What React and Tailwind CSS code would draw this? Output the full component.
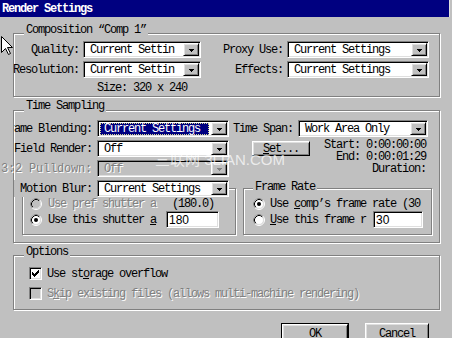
import React from "react";

const dim = "text-[#808080] [text-shadow:1px_1px_0_#fff]";
const sunken =
  "border border-t-[#808080] border-l-[#808080] border-r-white border-b-white shadow-[inset_1px_1px_0_#000,inset_-1px_-1px_0_#dfdfdf]";
const raised =
  "border border-t-white border-l-white border-r-black border-b-black shadow-[inset_1px_1px_0_#dfdfdf,inset_-1px_-1px_0_#808080]";

function Arrow({ off }) {
  const c = off ? "#808080" : "#000";
  return (
    <svg width="5" height="3" viewBox="0 0 5 3" shapeRendering="crispEdges">
      <rect x="0" y="0" width="5" height="1" fill={c} />
      <rect x="1" y="1" width="3" height="1" fill={c} />
      <rect x="2" y="2" width="1" height="1" fill={c} />
    </svg>
  );
}

function Combo({ className, value, selected, disabled }) {
  return (
    <div className={`${className} h-[17px] shrink-0 flex p-[1px] ${sunken} ${disabled ? "bg-[#c0c0c0]" : "bg-white"}`}>
      <div className="flex-1 min-w-0 flex items-center overflow-hidden whitespace-nowrap">
        {selected ? (
          <span className="ml-[1px] mr-[2px] flex-1 h-[12px] flex items-center pl-[3px] bg-[#000080] text-white border border-dotted border-[#d8d890]">
            {value}
          </span>
        ) : (
          <span className={`pl-[5px] ${disabled ? dim : ""}`}>{value}</span>
        )}
      </div>
      <div className={`w-[16px] h-full shrink-0 flex items-center justify-center pt-[1px] bg-[#c0c0c0] ${raised}`}>
        <Arrow off={disabled} />
      </div>
    </div>
  );
}

function Radio({ checked, disabled }) {
  return (
    <svg width="12" height="12" viewBox="0 0 12 12" className="shrink-0">
      <circle cx="6" cy="6" r="5.5" fill="none" stroke="#fff" />
      <path d="M2.11 9.89A5.5 5.5 0 0 1 9.89 2.11" fill="none" stroke="#808080" />
      <circle cx="6" cy="6" r="4.5" fill={disabled ? "#c0c0c0" : "#fff"} stroke="#dfdfdf" />
      <path d="M2.82 9.18A4.5 4.5 0 0 1 9.18 2.82" fill="none" stroke="#000" />
      {checked && <circle cx="6" cy="6" r="2" fill="#000" />}
    </svg>
  );
}

function Check({ checked, disabled }) {
  return (
    <div className={`w-[13px] h-[13px] shrink-0 flex items-center justify-center ${sunken} ${disabled ? "bg-[#c0c0c0]" : "bg-white"}`}>
      {checked && (
        <svg width="7" height="7" viewBox="0 0 7 7" shapeRendering="crispEdges">
          <rect x="6" y="0" width="1" height="1" />
          <rect x="5" y="1" width="2" height="1" />
          <rect x="0" y="2" width="1" height="1" />
          <rect x="4" y="2" width="3" height="1" />
          <rect x="0" y="3" width="2" height="1" />
          <rect x="3" y="3" width="3" height="1" />
          <rect x="0" y="4" width="5" height="1" />
          <rect x="1" y="5" width="3" height="1" />
          <rect x="2" y="6" width="1" height="1" />
        </svg>
      )}
    </div>
  );
}

function Field({ className, value }) {
  return (
    <div className={`${className} h-[17px] shrink-0 bg-white flex items-center pl-[2px] font-['Liberation_Sans',sans-serif] text-[12px] tracking-normal ${sunken}`}>
      {value}
    </div>
  );
}

function Label({ className, children }) {
  return (
    <div className={`${className} shrink-0 flex justify-end whitespace-nowrap`}>
      <span>{children}</span>
    </div>
  );
}

function Group({ className, title, titleClass, children }) {
  return (
    <div className={`relative shrink-0 border border-[#808080] shadow-[inset_1px_1px_0_#fff,1px_1px_0_#fff] ${className}`}>
      {title && (
        <div className={`absolute px-[2px] bg-[#c0c0c0] whitespace-nowrap ${titleClass}`}>{title}</div>
      )}
      {children}
    </div>
  );
}

export default function App() {
  return (
    <div className="relative w-[452px] h-[338px] overflow-hidden bg-[#c0c0c0] text-black font-['Liberation_Mono',monospace] text-[12px] leading-[12px] tracking-[-1.2px] flex flex-col">
      <div className="flex shrink-0">
        <div className="w-[449px] h-[17px] bg-[#000080] text-white font-bold flex items-center pl-[2px]">
          Render Settings
        </div>
        <div className="w-[1px] h-[17px] bg-[#dfdfdf]" />
      </div>

      {/* Composition */}
      <Group
        className="ml-[13px] mt-[16px] w-[427px] h-[64px]"
        title="Composition “Comp 1”"
        titleClass="top-[-10px] left-[10px]"
      >
        <div className="pt-[7px] flex flex-col gap-[3px]">
          <div className="flex h-[17px] items-center">
            <Label className="w-[65px]">Quality:</Label>
            <Combo className="ml-[4px] w-[118px]" value="Current Settin" />
            <Label className="w-[82px]">Proxy Use:</Label>
            <Combo className="ml-[4px] w-[142px]" value="Current Settings" />
          </div>
          <div className="flex h-[17px] items-center">
            <Label className="w-[65px]">Resolution:</Label>
            <Combo className="ml-[4px] w-[118px]" value="Current Settin" />
            <Label className="w-[82px]">Effects:</Label>
            <Combo className="ml-[4px] w-[142px]" value="Current Settings" />
          </div>
          <div className="ml-[83px] h-[14px] flex items-center">Size: 320 x 240</div>
        </div>
      </Group>

      {/* Time Sampling */}
      <Group
        className="ml-[13px] mt-[13px] w-[427px] h-[133px]"
        title="Time Sampling"
        titleClass="top-[-11px] left-[10px]"
      >
        <div className="flex pt-[9px]">
          <div className="w-[222px] shrink-0 flex flex-col">
            <div className="flex flex-col gap-[3px]">
              <div className="flex h-[17px] items-center">
                <Label className="w-[78px] overflow-hidden">Frame Blending:</Label>
                <Combo className="ml-[5px] w-[132px]" value="Current Settings" selected />
              </div>
              <div className="flex h-[17px] items-center">
                <Label className="w-[78px]">Field Render:</Label>
                <Combo className="ml-[5px] w-[132px]" value="Off" />
              </div>
              <div className="flex h-[17px] items-center">
                <Label className={`w-[78px] tracking-[-0.2px] ${dim}`}>3:2 Pulldown:</Label>
                <Combo className="ml-[5px] w-[132px]" value="Off" disabled />
              </div>
              <div className="relative z-10 flex h-[17px] items-center">
                <Label className="w-[83px] pr-[5px] bg-[#c0c0c0] h-full items-center">Motion Blur:</Label>
                <Combo className="w-[132px]" value="Current Settings" />
              </div>
            </div>
            <Group className="-mt-[9px] ml-[8px] w-[214px] h-[47px]">
              <div className="flex flex-col pt-[8px] pl-[7px] whitespace-nowrap">
                <div className="flex items-center h-[13px]">
                  <Radio disabled />
                  <span className={`ml-[6px] w-[118px] ${dim}`}>Use pref shutter a</span>
                  <span className="ml-[6px]">(180.0)</span>
                </div>
                <div className="flex items-center h-[17px] mt-[1px]">
                  <Radio checked />
                  <span className="ml-[6px] w-[118px]">
                    Use this shutter <u>a</u>
                  </span>
                  <Field className="w-[53px]" value="180" />
                </div>
              </div>
            </Group>
          </div>

          <div className="-ml-[3px] w-[205px] shrink-0 flex flex-col">
            <div className="flex h-[17px] items-center">
              <span className="w-[60px] whitespace-nowrap">Time Span:</span>
              <Combo className="ml-[5px] w-[130px]" value="Work Area Only" />
            </div>
            <div className="mt-[2px] h-[36px] flex">
              <div className={`ml-[19px] mt-[2px] w-[58px] h-[15px] flex items-center justify-center bg-[#c0c0c0] ${raised}`}>
                <span>
                  <u>S</u>et...
                </span>
              </div>
              <div className="ml-auto mr-[12px] flex flex-col items-end whitespace-nowrap">
                <span>Start: 0:00:00:00</span>
                <span>End: 0:00:01:29</span>
                <span>Duration:</span>
              </div>
            </div>
            <Group
              className="mt-[13px] ml-[10px] w-[189px] h-[47px]"
              title="Frame Rate"
              titleClass="top-[-8px] left-[9px]"
            >
              <div className="flex flex-col pt-[8px] pl-[9px] whitespace-nowrap">
                <div className="flex items-center h-[13px]">
                  <Radio checked />
                  <span className="ml-[5px]">
                    Use <u>c</u>omp’s frame rate (30
                  </span>
                </div>
                <div className="flex items-center h-[17px] mt-[1px]">
                  <Radio />
                  <span className="ml-[5px] w-[98px]">
                    <u>U</u>se this frame r
                  </span>
                  <Field className="ml-[5px] w-[50px]" value="30" />
                </div>
              </div>
            </Group>
          </div>
        </div>
      </Group>

      {/* Options */}
      <Group
        className="ml-[13px] mt-[12px] w-[427px] h-[55px]"
        title="Options"
        titleClass="top-[-10px] left-[10px]"
      >
        <div className="flex flex-col pt-[11px] pl-[15px] whitespace-nowrap">
          <div className="flex items-center h-[13px]">
            <Check checked />
            <span className="ml-[5px]">
              Use st<u>o</u>rage overflow
            </span>
          </div>
          <div className="flex items-center h-[13px] mt-[7px]">
            <Check disabled />
            <span className={`ml-[5px] ${dim}`}>
              S<u>k</u>ip existing files (allows multi-machine rendering)
            </span>
          </div>
        </div>
      </Group>

      <div className="flex mt-[13px] ml-[281px] gap-[16px] shrink-0">
        <div className="w-[68px] h-[22px] border border-black flex">
          <div className={`flex-1 flex items-center justify-center bg-[#c0c0c0] ${raised}`}>OK</div>
        </div>
        <div className={`w-[64px] h-[22px] flex items-center justify-center bg-[#c0c0c0] ${raised}`}>Cancel</div>
      </div>

      {/* watermark */}
      <div className="absolute left-[155px] top-[151px] text-[15px] leading-[18px] tracking-normal text-white/70 font-['Liberation_Sans','Noto_Sans_CJK_SC',sans-serif] whitespace-nowrap pointer-events-none">
        三联网 3LIAN.COM
      </div>

      {/* mouse pointer */}
      <svg className="absolute left-[1px] top-[36px]" width="13" height="20" viewBox="0 0 13 20">
        <path
          d="M0.5 0.5V16.5L4.5 12.5L7.5 18.5L9.5 17.5L6.5 11.5H11.5Z"
          fill="#fff"
          stroke="#000"
          strokeLinejoin="miter"
        />
      </svg>
    </div>
  );
}
